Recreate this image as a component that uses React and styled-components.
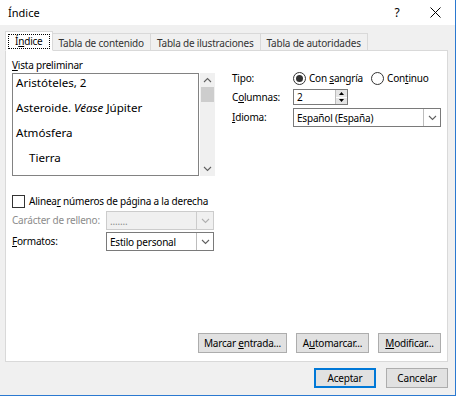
import React from 'react';
import styled, { createGlobalStyle } from 'styled-components';

const GlobalStyle = createGlobalStyle`
  html, body {
    margin: 0;
    padding: 0;
    background: #ffffff;
  }
  body {
    font-family: 'Noto Sans', 'Open Sans', sans-serif;
    font-size: 10px;
    letter-spacing: -0.2px;
    color: #000;
  }
`;

const Window = styled.div`
  width: 455px;
  height: 395px;
  border-right: 1px solid #2b79d0;
  border-bottom: 1px solid #2b79d0;
  display: flex;
  flex-direction: column;
  background: #f0f0f0;
`;

const TitleBar = styled.div`
  height: 25px;
  background: #fff;
  display: flex;
  align-items: center;
  padding-left: 8px;
  font-size: 11px;
  letter-spacing: 0;
`;

const Title = styled.div`
  flex: 1;
`;

const TitleButton = styled.div`
  width: ${(p) => p.$width}px;
  height: 25px;
  display: flex;
  align-items: center;
  justify-content: center;
  font-size: 12px;
`;

const Body = styled.div`
  flex: 1;
  display: flex;
  flex-direction: column;
  padding: 7px 7px 7px 5px;
`;

const TabRow = styled.div`
  display: flex;
  align-items: flex-end;
  height: 18px;
  position: relative;
  z-index: 1;
`;

const Tab = styled.div`
  height: ${(p) => (p.$active ? 18 : 15)}px;
  padding: ${(p) => (p.$active ? '0 3px' : '1px 6px 0 6px')};
  display: flex;
  align-items: center;
  white-space: nowrap;
  border: 1px solid #d9d9d9;
  border-bottom: ${(p) => (p.$active ? '1px solid #fff' : '1px solid #d9d9d9')};
  border-left: ${(p) => (p.$active || p.$first ? '1px solid #d9d9d9' : 'none')};
  background: ${(p) => (p.$active ? '#fff' : '#f0f0f0')};
  color: ${(p) => (p.$active ? '#000' : '#333')};
  margin-bottom: -1px;
`;

const FocusLabel = styled.span`
  outline: 1px dotted #000;
  padding: 0 6px;
  line-height: 13px;
`;

const Panel = styled.div`
  flex: 1;
  background: #fff;
  border: 1px solid #d9d9d9;
  display: flex;
  flex-direction: column;
  padding: 7px 6px 8px 6px;
`;

const Top = styled.div`
  display: flex;
  gap: 16px;
`;

const Preview = styled.div`
  width: 204px;
  display: flex;
  flex-direction: column;
`;

const Label = styled.div`
  color: ${(p) => (p.$disabled ? '#8c8c8c' : '#000')};
  line-height: 15px;
  white-space: nowrap;
`;

const PreviewRow = styled.div`
  display: flex;
`;

const PreviewBox = styled.div`
  width: 187px;
  height: 103px;
  box-sizing: border-box;
  border: 1px solid #828282;
  overflow: hidden;
  font-size: 11.6px;
  letter-spacing: 0;
  padding: 0 3px;
`;

const Entry = styled.div`
  height: 25px;
  line-height: 17px;
  padding-left: ${(p) => (p.$indent ? 13 : 0)}px;
  white-space: nowrap;
`;

const Scrollbar = styled.div`
  width: 15px;
  height: 103px;
  margin-left: 1px;
  background: #f0f0f0;
  display: flex;
  flex-direction: column;
  align-items: center;
`;

const ScrollArrow = styled.div`
  height: 14px;
  display: flex;
  align-items: center;
  justify-content: center;
`;

const Thumb = styled.div`
  width: 13px;
  height: 15px;
  background: #cdcdcd;
`;

const ScrollTrack = styled.div`
  flex: 1;
`;

const Options = styled.div`
  flex: 1;
  padding-top: 12px;
  display: grid;
  grid-template-columns: 61px 1fr;
  grid-auto-rows: min-content;
  row-gap: 3px;
  align-items: center;
`;

const RadioGroup = styled.div`
  display: flex;
  align-items: center;
  height: 16px;
  white-space: nowrap;
`;

const RadioItem = styled.label`
  display: flex;
  align-items: center;
  gap: 3px;
  margin-right: 8px;
`;

const RadioCircle = styled.span`
  width: 11px;
  height: 11px;
  border: 1px solid #333;
  border-radius: 50%;
  display: flex;
  align-items: center;
  justify-content: center;
  &::after {
    content: '';
    width: 7px;
    height: 7px;
    border-radius: 50%;
    background: ${(p) => (p.$checked ? '#333' : 'transparent')};
  }
`;

const Spin = styled.div`
  width: 55px;
  height: 16px;
  border: 1px solid #7a7a7a;
  box-sizing: border-box;
  display: flex;
`;

const SpinValue = styled.div`
  flex: 1;
  padding-left: 3px;
  line-height: 14px;
`;

const SpinButtons = styled.div`
  width: 11px;
  display: flex;
  flex-direction: column;
  border-left: 1px solid #bdbdbd;
`;

const SpinBtn = styled.div`
  flex: 1;
  background: #e5e5e5;
  border-bottom: ${(p) => (p.$top ? '1px solid #fff' : 'none')};
  display: flex;
  align-items: center;
  justify-content: center;
`;

const Select = styled.div`
  width: ${(p) => p.$width}px;
  height: ${(p) => p.$height || 19}px;
  box-sizing: border-box;
  border: 1px solid ${(p) => (p.$disabled ? '#cccccc' : '#7a7a7a')};
  background: ${(p) => (p.$disabled ? '#f0f0f0' : '#fff')};
  color: ${(p) => (p.$disabled ? '#8c8c8c' : '#000')};
  display: flex;
  align-items: center;
`;

const SelectValue = styled.div`
  flex: 1;
  padding-left: 3px;
  white-space: nowrap;
`;

const SelectArrow = styled.div`
  width: 16px;
  align-self: stretch;
  border-left: 1px solid ${(p) => (p.$disabled ? '#cccccc' : '#bdbdbd')};
  display: flex;
  align-items: center;
  justify-content: center;
`;

const Lower = styled.div`
  margin-top: 17px;
  display: flex;
  flex-direction: column;
`;

const CheckRow = styled.label`
  display: flex;
  align-items: center;
  gap: 4px;
  height: 16px;
  white-space: nowrap;
`;

const CheckBox = styled.span`
  width: 11px;
  height: 11px;
  border: 1px solid #333;
`;

const FieldRow = styled.div`
  display: flex;
  align-items: center;
  margin-top: ${(p) => p.$mt || 0}px;
`;

const FieldLabel = styled(Label)`
  width: 94px;
`;

const Spacer = styled.div`
  flex: 1;
`;

const ButtonRow = styled.div`
  display: flex;
  justify-content: flex-end;
  gap: ${(p) => p.$gap || 9}px;
  margin-top: ${(p) => p.$mt || 0}px;
`;

const Button = styled.button`
  font-family: inherit;
  font-size: 10px;
  letter-spacing: -0.2px;
  white-space: nowrap;
  height: 20px;
  width: ${(p) => p.$width}px;
  padding: 0;
  box-sizing: border-box;
  background: #e1e1e1;
  border: ${(p) => (p.$default ? '2px solid #0078d7' : '1px solid #adadad')};
  color: #000;
`;

const U = styled.span`
  text-decoration: underline;
  text-underline-offset: 1px;
`;

function Chevron({ dir = 'down', color = '#606060' }) {
  return (
    <svg width="9" height="6" viewBox="0 0 9 6">
      <path
        d={dir === 'down' ? 'M1 1 L4.5 4.5 L8 1' : 'M1 5 L4.5 1.5 L8 5'}
        fill="none"
        stroke={color}
        strokeWidth="1.1"
      />
    </svg>
  );
}

function Triangle({ up }) {
  return (
    <svg width="5" height="3" viewBox="0 0 5 3">
      <path d={up ? 'M0 3 L2.5 0 L5 3 Z' : 'M0 0 L2.5 3 L5 0 Z'} fill="#000" />
    </svg>
  );
}

export default function App() {
  return (
    <>
      <GlobalStyle />
      <Window>
        <TitleBar>
          <Title>Índice</Title>
          <TitleButton $width={36}>?</TitleButton>
          <TitleButton $width={40}>
            <svg width="11" height="11" viewBox="0 0 11 11">
              <path d="M0.5 0.5 L10.5 10.5 M10.5 0.5 L0.5 10.5" stroke="#000" strokeWidth="1" />
            </svg>
          </TitleButton>
        </TitleBar>
        <Body>
          <TabRow>
            <Tab $active $first>
              <FocusLabel>
                Í<U>n</U>dice
              </FocusLabel>
            </Tab>
            <Tab>Tabla de contenido</Tab>
            <Tab>Tabla de ilustraciones</Tab>
            <Tab>Tabla de autoridades</Tab>
          </TabRow>
          <Panel>
            <Top>
              <Preview>
                <Label>
                  <U>V</U>ista preliminar
                </Label>
                <PreviewRow>
                  <PreviewBox>
                    <Entry>Aristóteles, 2</Entry>
                    <Entry>
                      Asteroide. <i>Véase</i> Júpiter
                    </Entry>
                    <Entry>Atmósfera</Entry>
                    <Entry $indent>Tierra</Entry>
                  </PreviewBox>
                  <Scrollbar>
                    <ScrollArrow>
                      <Chevron dir="up" />
                    </ScrollArrow>
                    <Thumb />
                    <ScrollTrack />
                    <ScrollArrow>
                      <Chevron dir="down" />
                    </ScrollArrow>
                  </Scrollbar>
                </PreviewRow>
              </Preview>
              <Options>
                <Label>Tipo:</Label>
                <RadioGroup>
                  <RadioItem>
                    <RadioCircle $checked />
                    <span>
                      Con <U>s</U>angría
                    </span>
                  </RadioItem>
                  <RadioItem>
                    <RadioCircle />
                    <span>
                      Con<U>t</U>inuo
                    </span>
                  </RadioItem>
                </RadioGroup>
                <Label>
                  C<U>o</U>lumnas:
                </Label>
                <Spin>
                  <SpinValue>2</SpinValue>
                  <SpinButtons>
                    <SpinBtn $top>
                      <Triangle up />
                    </SpinBtn>
                    <SpinBtn>
                      <Triangle />
                    </SpinBtn>
                  </SpinButtons>
                </Spin>
                <Label>
                  <U>I</U>dioma:
                </Label>
                <Select $width={148}>
                  <SelectValue>Español (España)</SelectValue>
                  <SelectArrow>
                    <Chevron />
                  </SelectArrow>
                </Select>
              </Options>
            </Top>
            <Lower>
              <CheckRow>
                <CheckBox />
                <span>
                  Alinea<U>r</U> números de página a la derecha
                </span>
              </CheckRow>
              <FieldRow $mt={2}>
                <FieldLabel $disabled>Carácter de relleno:</FieldLabel>
                <Select $width={108} $disabled>
                  <SelectValue>.......</SelectValue>
                  <SelectArrow $disabled>
                    <Chevron color="#b0b0b0" />
                  </SelectArrow>
                </Select>
              </FieldRow>
              <FieldRow $mt={2}>
                <FieldLabel>
                  <U>F</U>ormatos:
                </FieldLabel>
                <Select $width={108}>
                  <SelectValue>Estilo personal</SelectValue>
                  <SelectArrow>
                    <Chevron />
                  </SelectArrow>
                </Select>
              </FieldRow>
            </Lower>
            <Spacer />
            <ButtonRow>
              <Button $width={89}>
                Marcar <U>e</U>ntrada...
              </Button>
              <Button $width={73}>
                A<U>u</U>tomarcar...
              </Button>
              <Button $width={63}>
                <U>M</U>odificar...
              </Button>
            </ButtonRow>
          </Panel>
          <ButtonRow $mt={6} $gap={10}>
            <Button $width={62} $default>
              Aceptar
            </Button>
            <Button $width={62}>Cancelar</Button>
          </ButtonRow>
        </Body>
      </Window>
    </>
  );
}
